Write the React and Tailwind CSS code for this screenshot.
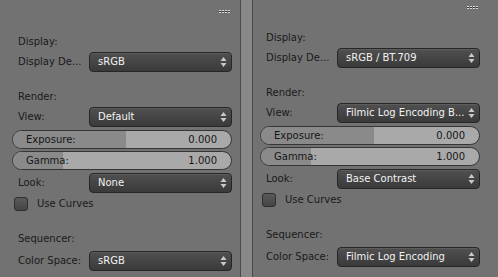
import React from 'react';

const font = { fontFamily: '"DejaVu Sans", "Liberation Sans", sans-serif' };

const Arrows = () => (
  <svg width="7" height="12" viewBox="0 0 7 12" className="shrink-0">
    <path d="M3.5 1 L6.5 5 L0.5 5 Z" fill="#c9c9c9" />
    <path d="M3.5 11 L6.5 7 L0.5 7 Z" fill="#c9c9c9" />
  </svg>
);

const Dropdown = ({ value }) => (
  <div className="w-[143px] h-[20px] shrink-0 rounded-[4px] border border-[#262626] bg-gradient-to-b from-[#505050] to-[#3a3a3a] flex items-center pl-[8px] pr-[4px] text-[#f2f2f2] shadow-[inset_0_1px_0_rgba(255,255,255,0.08)]">
    <span className="flex-1 whitespace-nowrap overflow-hidden">{value}</span>
    <Arrows />
  </div>
);

const Row = ({ label, value, className = '' }) => (
  <div className={`flex items-center h-[20px] ${className}`}>
    <span className="w-[89px] shrink-0 pl-[18px] whitespace-nowrap">{label}</span>
    <Dropdown value={value} />
  </div>
);

const Label = ({ children, className = '' }) => (
  <div className={`h-[20px] flex items-center pl-[18px] ${className}`}>{children}</div>
);

const Slider = ({ label, value, fill, className = '' }) => (
  <div className={`ml-[12px] w-[220px] h-[19px] rounded-full border border-[#353535] overflow-hidden relative bg-[#a9a9a9] ${className}`}>
    <div className="absolute left-0 top-0 bottom-0 bg-[#8a8a8a]" style={{ width: fill }} />
    <div className="relative h-full flex items-center justify-between pl-[13px] pr-[14px] text-[#161616]">
      <span>{label}</span>
      <span>{value}</span>
    </div>
  </div>
);

const Dots = () => (
  <div className="flex gap-[1px] ml-[219px]">
    {[0, 1, 2, 3].map((i) => (
      <div key={i} className="w-[2px] h-[3px] flex flex-col">
        <div className="h-[1px] bg-[#d8d8d8]" />
        <div className="h-[1px] bg-[#3a3a3a]" />
        <div className="h-[1px] bg-[#d8d8d8]" />
      </div>
    ))}
  </div>
);

const Panel = ({ d, top }) => (
  <div className="w-[240px] shrink-0 text-[10px] text-[#1a1a1a] leading-none" style={font}>
    <div className={top}>
      <Dots />
    </div>
    <Label className="mt-[19px]">Display:</Label>
    <Row label="Display De..." value={d.display} />
    <Label className="mt-[15px]">Render:</Label>
    <Row label="View:" value={d.view} />
    <Slider label="Exposure:" value="0.000" fill="113px" className="mt-[3px]" />
    <Slider label="Gamma:" value="1.000" fill="50px" className="mt-[2px]" />
    <Row label="Look:" value={d.look} className="mt-[3px]" />
    <div className="flex items-center h-[18px] mt-[2px] pl-[14px]">
      <div className="w-[14px] h-[14px] rounded-[3px] border border-[#2e2e2e] bg-gradient-to-b from-[#5a5a5a] to-[#454545]" />
      <span className="ml-[9px]">Use Curves</span>
    </div>
    <Label className="mt-[16px]">Sequencer:</Label>
    <Row label="Color Space:" value={d.color} className="mt-[2px]" />
  </div>
);

export default function App() {
  return (
    <div className="w-[498px] h-[277px] bg-[#727272] flex overflow-hidden">
      <Panel
        top="pt-[10px]"
        d={{ display: 'sRGB', view: 'Default', look: 'None', color: 'sRGB' }}
      />
      <div className="w-[13px] h-full flex shrink-0">
        <div className="w-[1px] bg-[#4a4a4a]" />
        <div className="flex-1 bg-[#888888]" />
        <div className="w-[1px] bg-[#4a4a4a]" />
      </div>
      <div className="flex-1 -ml-[5px]">
        <Panel
          top="pt-[6px]"
          d={{
            display: 'sRGB / BT.709',
            view: 'Filmic Log Encoding B...',
            look: 'Base Contrast',
            color: 'Filmic Log Encoding',
          }}
        />
      </div>
    </div>
  );
}
